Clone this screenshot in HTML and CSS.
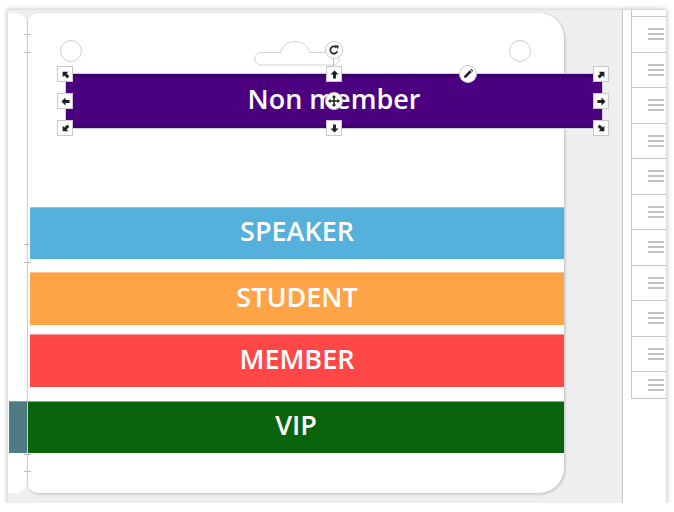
FILE: index.html
```html
<!DOCTYPE html>
<html lang="en">
<head>
<meta charset="utf-8">
<title>Badge designer</title>
<link rel="stylesheet" href="styles.css">
</head>
<body>
<div class="frame">
  <div class="canvas">
    <div class="stub"><div class="stub-vip"></div></div>
    <div class="badge">
      <span class="hole hole-left"></span>
      <span class="hole hole-right"></span>
      <svg class="slot" width="86" height="28" viewBox="0 0 86 28"><path d="M7 12.5 H26.5 C28 6, 33 1.5, 41 1.5 C49 1.5, 54 6, 55.5 12.5 H79 A6.25 6.25 0 0 1 79 25 H7 A6.25 6.25 0 0 1 7 12.5 Z" fill="#fff" stroke="#d2d2d2" stroke-width="1"/></svg>
      <div class="band band-speaker">SPEAKER</div>
      <div class="band band-student">STUDENT</div>
      <div class="band band-member">MEMBER</div>
      <div class="band band-vip">VIP</div>
      <div class="band band-non">Non member
        <span class="connector"></span>
        <span class="round rotate"><svg width="12" height="12" viewBox="0 0 12 12"><path d="M9.3 7.2 A3.6 3.6 0 1 1 8.4 3.4" fill="none" stroke="#222" stroke-width="1.7"/><path d="M6.6 1.2 L10.6 1.4 L10.2 5.3 Z" fill="#222"/></svg></span>
        <span class="round move"><svg width="12" height="12" viewBox="0 0 12 12"><path d="M6 1.5 V10.5 M1.5 6 H10.5" stroke="#222" stroke-width="1.6"/><path d="M6 0 L8.3 2.6 H3.7 Z M6 12 L8.3 9.4 H3.7 Z M0 6 L2.6 3.7 V8.3 Z M12 6 L9.4 3.7 V8.3 Z" fill="#222"/></svg></span>
        <span class="round pencil"><svg width="10" height="10" viewBox="0 0 10 10"><path d="M1 9 L1.5 6.6 L6.9 1.2 L8.8 3.1 L3.4 8.5 Z" fill="#222"/><path d="M7.5 0.6 L8.3 -0.2 L10.2 1.7 L9.4 2.5 Z" fill="#222"/></svg></span>
        <span class="handle h-nw"><svg class="arr" viewBox="0 0 10 10"><path d="M5 0.5 L9.5 5 H6.6 V9.5 H3.4 V5 H0.5 Z"/></svg></span>
        <span class="handle h-n"><svg class="arr" viewBox="0 0 10 10"><path d="M5 0.5 L9.5 5 H6.6 V9.5 H3.4 V5 H0.5 Z"/></svg></span>
        <span class="handle h-ne"><svg class="arr" viewBox="0 0 10 10"><path d="M5 0.5 L9.5 5 H6.6 V9.5 H3.4 V5 H0.5 Z"/></svg></span>
        <span class="handle h-w"><svg class="arr" viewBox="0 0 10 10"><path d="M5 0.5 L9.5 5 H6.6 V9.5 H3.4 V5 H0.5 Z"/></svg></span>
        <span class="handle h-e"><svg class="arr" viewBox="0 0 10 10"><path d="M5 0.5 L9.5 5 H6.6 V9.5 H3.4 V5 H0.5 Z"/></svg></span>
        <span class="handle h-sw"><svg class="arr" viewBox="0 0 10 10"><path d="M5 0.5 L9.5 5 H6.6 V9.5 H3.4 V5 H0.5 Z"/></svg></span>
        <span class="handle h-s"><svg class="arr" viewBox="0 0 10 10"><path d="M5 0.5 L9.5 5 H6.6 V9.5 H3.4 V5 H0.5 Z"/></svg></span>
        <span class="handle h-se"><svg class="arr" viewBox="0 0 10 10"><path d="M5 0.5 L9.5 5 H6.6 V9.5 H3.4 V5 H0.5 Z"/></svg></span>
      </div>
    </div>
    <div class="guide">
      <span class="tick t1"></span><span class="tick t2"></span>
      <span class="tick t3"></span><span class="tick t4"></span>
      <span class="tick t5"></span><span class="tick t6"></span>
    </div>
  </div>
  <aside class="panel">
    <ul class="layers">
      <li class="layer layer-top"></li>
      <li class="layer"><span class="grip"></span></li>
      <li class="layer"><span class="grip"></span></li>
      <li class="layer"><span class="grip"></span></li>
      <li class="layer"><span class="grip"></span></li>
      <li class="layer"><span class="grip"></span></li>
      <li class="layer"><span class="grip"></span></li>
      <li class="layer"><span class="grip"></span></li>
      <li class="layer"><span class="grip"></span></li>
      <li class="layer"><span class="grip"></span></li>
      <li class="layer"><span class="grip"></span></li>
      <li class="layer layer-last"><span class="grip"></span></li>
    </ul>
  </aside>
</div>
</body>
</html>
```
FILE: styles.css
```css
* { box-sizing: border-box; }
html, body { margin: 0; padding: 0; background: #fff; }
body { font-family: "Open Sans", "Liberation Sans", sans-serif; }

.frame {
  margin: 10px 0 0 8px;
  width: 658px;
  height: 493px;
  display: flex;
  box-shadow: 0 0 5px 1px rgba(0,0,0,0.22);
}

.canvas {
  flex: 1;
  position: relative;
  background: #efefef;
  overflow: hidden;
}

.stub {
  position: absolute;
  left: 0; top: 3px;
  width: 19px; height: 480px;
  background: #fff;
  border-radius: 0 12px 12px 0;
}
.stub-vip {
  position: absolute;
  left: 1px; top: 388px;
  width: 18px; height: 52px;
  background: #4f7b85;
  border-top: 1px solid #9a9a9a;
}

.badge {
  position: absolute;
  left: 19px; top: 3px;
  width: 537px; height: 480px;
  background: #fff;
  border-radius: 12px 25px 25px 12px;
  box-shadow: 1px 1px 3px rgba(0,0,0,0.22);
}

.hole {
  position: absolute;
  top: 27px;
  width: 22px; height: 22px;
  border: 1px solid #cfcfcf;
  border-radius: 50%;
  background: #fff;
}
.hole-left { left: 33px; }
.hole-right { left: 482px; }
.slot { position: absolute; left: 227px; top: 27px; }

.band {
  position: absolute;
  display: flex;
  align-items: center;
  justify-content: center;
  color: #fff;
  font-weight: 600;
  font-size: 27px;
  padding-bottom: 6px;
}
.band-speaker { left: 3px; top: 194px; width: 534px; height: 52px; background: #55b0dc; border-top: 1px solid #8ccbe8; }
.band-student { left: 3px; top: 259px; width: 534px; height: 53px; background: #ffa347; border-top: 1px solid #ffc58c; }
.band-member  { left: 3px; top: 321px; width: 534px; height: 53px; background: #ff4747; border-top: 1px solid #ff9a9a; }
.band-vip     { left: 1px; top: 388px; width: 536px; height: 52px; background: #0a640c; border-top: 1px solid #9a9a9a; }

.band-non {
  left: 39px; top: 61px;
  width: 536px; height: 54px;
  background: #4b0080;
  box-shadow: inset 0 3px 0 #3f006c, inset 0 -3px 0 #3f006c, 0 0 0 1px #cfcfcf;
  font-size: 27px;
  padding-bottom: 5px;
}

.handle {
  position: absolute;
  width: 16px; height: 16px;
  background: #fff;
  border: 1px solid #c9c9c9;
  display: flex;
  align-items: center;
  justify-content: center;
}
.arr { width: 9px; height: 9px; fill: #1e1e1e; }
.h-nw { left: -9px; top: -8px; }
.h-n  { left: 260px; top: -8px; }
.h-ne { left: 527px; top: -8px; }
.h-w  { left: -9px; top: 19px; }
.h-e  { left: 527px; top: 19px; }
.h-sw { left: -9px; top: 46px; }
.h-s  { left: 260px; top: 46px; }
.h-se { left: 527px; top: 46px; }
.h-nw .arr { transform: rotate(-45deg); }
.h-ne .arr { transform: rotate(45deg); }
.h-w .arr  { transform: rotate(-90deg); }
.h-e .arr  { transform: rotate(90deg); }
.h-sw .arr { transform: rotate(-135deg); }
.h-s .arr  { transform: rotate(180deg); }
.h-se .arr { transform: rotate(135deg); }

.round {
  position: absolute;
  width: 18px; height: 18px;
  border-radius: 50%;
  background: #fff;
  border: 1px solid #c9c9c9;
  display: flex;
  align-items: center;
  justify-content: center;
}
.rotate { left: 259px; top: -33px; }
.move { left: 259px; top: 18px; }
.pencil { left: 393px; top: -9px; }
.connector {
  position: absolute;
  left: 267px; top: -16px;
  width: 1px; height: 8px;
  background: #bdbdbd;
}

.guide {
  position: absolute;
  left: 19px; top: 10px;
  width: 1px; height: 466px;
  background: #cfcfcf;
}
.tick {
  position: absolute;
  left: -3px;
  width: 7px; height: 1px;
  background: #bdbdbd;
}
.t1 { top: 14px; }
.t2 { top: 32px; }
.t3 { top: 224px; }
.t4 { top: 242px; }
.t5 { top: 434px; }
.t6 { top: 451px; }

.panel {
  width: 44px;
  background: #fff;
  border-left: 1px solid #c9c9c9;
  box-shadow: -2px 0 3px rgba(0,0,0,0.08);
  overflow: hidden;
}
.layers {
  list-style: none;
  margin: 0 0 0 8px;
  padding: 0;
  width: 40px;
  border-left: 1px solid #c9c9c9;
}
.layer {
  height: 35.5px;
  border-bottom: 1px solid #c9c9c9;
  display: flex;
  align-items: center;
  padding-left: 16px;
}
.layer-top { height: 7px; }
.layer-last { height: 27px; }
.grip {
  width: 16px; height: 12px;
  background: linear-gradient(#c2c2c2 0 2px, transparent 2px 5px, #c2c2c2 5px 7px, transparent 7px 10px, #c2c2c2 10px 12px);
}
```
